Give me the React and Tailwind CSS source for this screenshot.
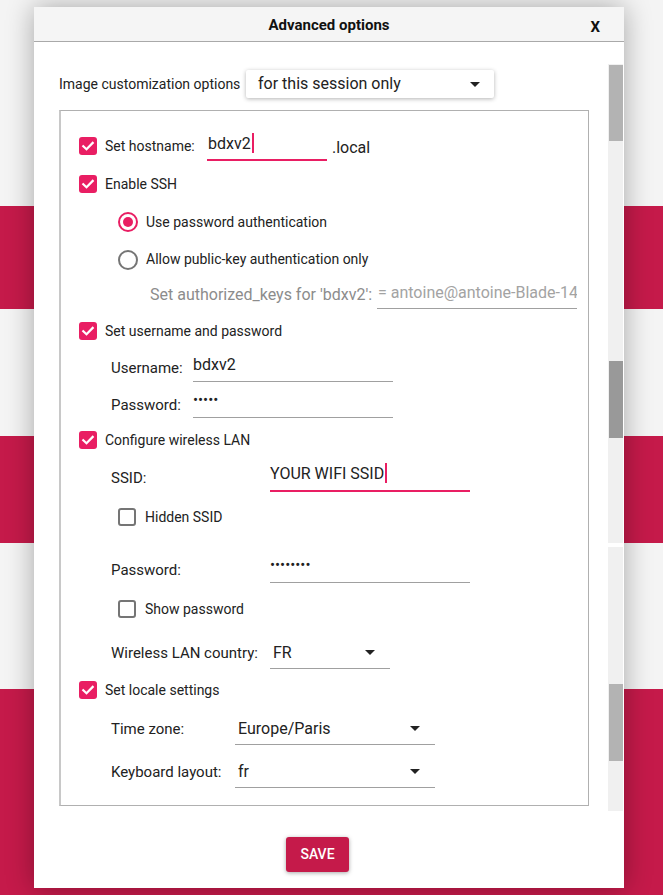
import React from "react";

function Check() {
  return (
    <div className="w-[18px] h-[18px] rounded-[3px] bg-[#e91e63] flex items-center justify-center shrink-0">
      <svg width="14" height="14" viewBox="0 0 14 14">
        <path d="M2.3 7.3 L5.5 10.3 L11.7 3.9" fill="none" stroke="white" strokeWidth="2.2" strokeLinecap="square" />
      </svg>
    </div>
  );
}

function Unchecked() {
  return <div className="w-[18px] h-[18px] rounded-[3px] border-2 border-[#757575] shrink-0" />;
}

function Arrow() {
  return (
    <svg width="10" height="5" viewBox="0 0 10 5" className="shrink-0">
      <path d="M0 0 H10 L5 5 Z" fill="#222" />
    </svg>
  );
}

function Cursor() {
  return <span className="inline-block w-[2px] h-[20px] bg-[#e91e63] align-middle ml-[1px] -mt-[3px]" />;
}

export default function App() {
  return (
    <div className="relative w-[663px] h-[895px] overflow-hidden font-['Roboto',sans-serif]">
      {/* background bands */}
      <div className="flex flex-col w-full h-full">
        <div className="h-[206px] bg-[#f4f4f4]" />
        <div className="h-[103px] bg-[#c51a4a]" />
        <div className="h-[127px] bg-[#f4f4f4]" />
        <div className="h-[107px] bg-[#c51a4a]" />
        <div className="h-[146px] bg-[#f4f4f4]" />
        <div className="flex-1 bg-[#c51a4a]" />
      </div>

      {/* dialog */}
      <div className="absolute left-[34px] top-[7px] w-[590px] h-[881px] bg-white shadow-[0_0_26px_rgba(0,0,0,0.32)] flex flex-col">
        <div className="h-[35px] shrink-0 bg-[#f5f5f5] border-b border-[#a9a9a9] flex items-center relative">
          <div className="flex-1 text-center text-[15px] font-bold text-[#111] pt-[2px]">Advanced options</div>
          <div className="absolute right-[24px] top-[9px] text-[15px] font-bold text-[#111]">X</div>
        </div>

        <div className="flex flex-1">
          <div className="flex-1 flex flex-col pl-[25px]">
            {/* top dropdown row */}
            <div className="mt-[28px] h-[28px] flex items-center">
              <span className="text-[14px] text-[#222] w-[187px]">Image customization options</span>
              <div className="w-[248px] h-[28px] bg-white rounded-[2px] shadow-[0_1px_4px_rgba(0,0,0,0.3)] flex items-center pl-[12px] pr-[14px]">
                <span className="flex-1 text-[16px] text-[#222]">for this session only</span>
                <Arrow />
              </div>
            </div>

            {/* group box */}
            <div className="mt-[12px] w-[530px] border border-[#b0b0b0] border-l-2 border-l-[#c8c8c8] pt-[16px] pb-[12px] flex flex-col text-[14px] text-[#222]">
              {/* hostname */}
              <div className="h-[38px] flex items-center pl-[18px]">
                <Check />
                <span className="ml-[8px] w-[102px]">Set hostname:</span>
                <div className="w-[120px] h-[29px] border-b-2 border-[#e91e63] text-[16px] leading-[19px] pt-[2px] pl-[1px]">
                  bdxv2<Cursor />
                </div>
                <span className="ml-[5px] text-[16px] mt-[3px]">.local</span>
              </div>
              {/* ssh */}
              <div className="h-[38px] flex items-center pl-[18px]">
                <Check />
                <span className="ml-[8px]">Enable SSH</span>
              </div>
              {/* radio 1 */}
              <div className="h-[38px] flex items-center pl-[57px]">
                <div className="w-[20px] h-[20px] rounded-full border-2 border-[#e91e63] flex items-center justify-center">
                  <div className="w-[10px] h-[10px] rounded-full bg-[#e91e63]" />
                </div>
                <span className="ml-[8px]">Use password authentication</span>
              </div>
              {/* radio 2 */}
              <div className="h-[37px] flex items-center pl-[57px]">
                <div className="w-[20px] h-[20px] rounded-full border-2 border-[#757575]" />
                <span className="ml-[8px]">Allow public-key authentication only</span>
              </div>
              {/* keys */}
              <div className="h-[33px] flex items-center pl-[89px]">
                <span className="w-[227px] text-[16px] text-[#8c8c8c] whitespace-nowrap">Set authorized_keys for 'bdxv2':</span>
                <div className="w-[200px] h-[29px] border-b border-[#a0a0a0] text-[16px] leading-[19px] pt-[3px] pl-[1px] text-[#a3a3a3] whitespace-nowrap overflow-hidden">
                  = antoine@antoine-Blade-14
                </div>
              </div>
              {/* username pw */}
              <div className="h-[40px] flex items-center pl-[18px]">
                <Check />
                <span className="ml-[8px]">Set username and password</span>
              </div>
              <div className="h-[33px] flex items-center pl-[50px]">
                <span className="w-[82px] text-[15px] mt-[2px]">Username:</span>
                <div className="w-[200px] h-[28px] border-b border-[#a0a0a0] text-[16px] leading-[19px] pt-[1px]">bdxv2</div>
              </div>
              <div className="h-[39px] flex items-center pl-[50px]">
                <span className="w-[82px] text-[15px] mt-[3px]">Password:</span>
                <div className="w-[200px] h-[28px] border-b border-[#a0a0a0] text-[15px] leading-[19px] pt-[1px]">•••••</div>
              </div>
              {/* wireless */}
              <div className="h-[34px] flex items-center pl-[18px]">
                <Check />
                <span className="ml-[8px]">Configure wireless LAN</span>
              </div>
              <div className="h-[40px] flex items-center pl-[50px]">
                <span className="w-[159px] text-[15px] mt-[3px]">SSID:</span>
                <div className="w-[200px] h-[29px] border-b-2 border-[#e91e63] text-[16px] leading-[19px] pt-[1px]">
                  YOUR WIFI SSID<Cursor />
                </div>
              </div>
              <div className="h-[40px] flex items-center pl-[57px]">
                <Unchecked />
                <span className="ml-[9px]">Hidden SSID</span>
              </div>
              <div className="h-[16px]" />
              <div className="h-[32px] flex items-center pl-[50px]">
                <span className="w-[159px] text-[15px] mt-[3px]">Password:</span>
                <div className="w-[200px] h-[28px] border-b border-[#a0a0a0] text-[15px] leading-[19px] pt-[1px]">••••••••</div>
              </div>
              <div className="h-[48px] flex items-center pl-[57px]">
                <Unchecked />
                <span className="ml-[9px]">Show password</span>
              </div>
              <div className="h-[40px] flex items-center pl-[50px]">
                <span className="w-[159px] text-[15px]">Wireless LAN country:</span>
                <div className="w-[120px] h-[32px] border-b border-[#a0a0a0] flex items-center pl-[3px] pr-[15px]">
                  <span className="flex-1 text-[16px]">FR</span>
                  <Arrow />
                </div>
              </div>
              {/* locale */}
              <div className="h-[34px] flex items-center pl-[18px]">
                <Check />
                <span className="ml-[8px]">Set locale settings</span>
              </div>
              <div className="h-[44px] flex items-center pl-[50px]">
                <span className="w-[124px] text-[15px]">Time zone:</span>
                <div className="w-[200px] h-[32px] border-b border-[#a0a0a0] flex items-center pl-[3px] pr-[15px]">
                  <span className="flex-1 text-[16px]">Europe/Paris</span>
                  <Arrow />
                </div>
              </div>
              <div className="h-[42px] flex items-center pl-[50px]">
                <span className="w-[124px] text-[15px]">Keyboard layout:</span>
                <div className="w-[200px] h-[32px] border-b border-[#a0a0a0] flex items-center pl-[3px] pr-[15px]">
                  <span className="flex-1 text-[16px]">fr</span>
                  <Arrow />
                </div>
              </div>
            </div>

            {/* save */}
            <div className="mt-[31px] pl-[227px]">
              <div className="w-[63px] h-[35px] bg-[#c51a4a] rounded-[3px] shadow-[0_1px_4px_rgba(0,0,0,0.35)] flex items-center justify-center text-white text-[14px] font-medium">
                SAVE
              </div>
            </div>
          </div>

          {/* scrollbar strip (stitched) */}
          <div className="w-[15px] mt-[22px] mr-[1px] flex flex-col">
            <div className="h-[479px] bg-[#f0f0f0] flex flex-col pl-[1px]">
              <div className="h-[1px]" />
              <div className="h-[76px] w-[14px] bg-[#b3b3b3]" />
              <div className="h-[220px]" />
              <div className="h-[77px] w-[14px] bg-[#999999]" />
            </div>
            <div className="h-[4px] bg-white" />
            <div className="h-[264px] bg-[#f0f0f0] flex flex-col pl-[1px]">
              <div className="h-[137px]" />
              <div className="h-[77px] w-[14px] bg-[#b3b3b3]" />
            </div>
          </div>
        </div>
      </div>
    </div>
  );
}
